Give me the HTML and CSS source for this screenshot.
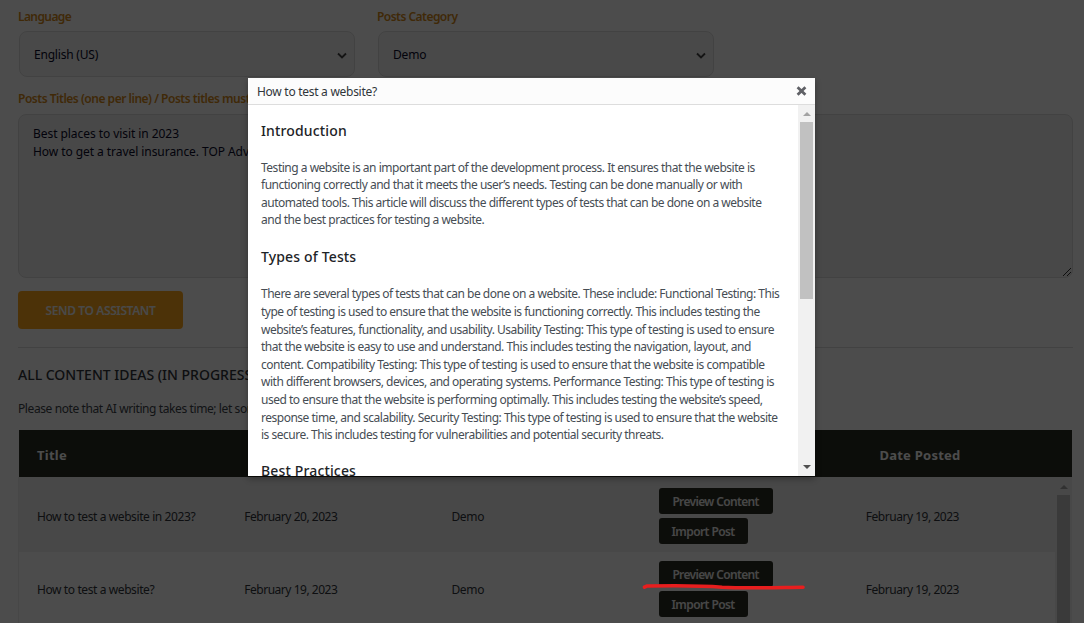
FILE: index.html
```html
<!DOCTYPE html>
<html lang="en">
<head>
<meta charset="utf-8">
<title>Content ideas</title>
<link rel="stylesheet" href="styles.css">
</head>
<body>
<main class="page">
  <div class="fields">
    <div class="field"><div class="label">Language</div>
      <div class="select"><span>English (US)</span><svg width="12" height="8" viewBox="0 0 12 8"><path d="M2 1.5 6 5.5 10 1.5"/></svg></div></div>
    <div class="field"><div class="label label-cat">Posts Category</div>
      <div class="select"><span>Demo</span><svg width="12" height="8" viewBox="0 0 12 8"><path d="M2 1.5 6 5.5 10 1.5"/></svg></div></div>
  </div>
  <div class="label label-titles">Posts Titles (one per line) / Posts titles must</div>
  <div class="textarea"><div>Best places to visit in 2023</div><div>How to get a travel insurance. TOP Adv</div>
    <svg class="grip" width="10" height="10" viewBox="0 0 10 10"><path d="M1 9 9 1M5 9 9 5"/></svg></div>
  <div class="send">SEND TO ASSISTANT</div>
  <h2 class="heading">ALL CONTENT IDEAS (IN PROGRESS</h2>
  <p class="note">Please note that AI writing takes time; let som</p>
  <div class="table">
    <div class="thead"><div>Title</div><div></div><div></div><div></div><div>Date Posted</div></div>
    <div class="tbody">
      <div class="rows">
        <div class="row odd"><div>How to test a website in 2023?</div><div>February 20, 2023</div><div>Demo</div><div class="actions"><span class="btn preview">Preview Content</span><span class="btn import">Import Post</span></div><div>February 19, 2023</div></div>
        <div class="row"><div>How to test a website?</div><div>February 19, 2023</div><div>Demo</div><div class="actions"><span class="btn preview">Preview Content</span><span class="btn import">Import Post</span></div><div>February 19, 2023</div></div>
      </div>
      <div class="bar"><i class="up"></i><i class="thumb"></i></div>
    </div>
  </div>
</main>
<div class="overlay"></div>
<section class="modal">
  <header class="modal-head"><span>How to test a website?</span><svg width="11" height="10" viewBox="0 0 11 10"><path d="M1.6 1.3 9.4 8.7M9.4 1.3 1.6 8.7"/></svg></header>
  <div class="modal-body">
    <article class="article">
      <h3>Introduction</h3>
      <p class="intro">Testing a website is an important part of the development process. It ensures that the website is<br>functioning correctly and that it meets the user’s needs. Testing can be done manually or with<br>automated tools. This article will discuss the different types of tests that can be done on a website<br>and the best practices for testing a website.</p>
      <h3>Types of Tests</h3>
      <p>There are several types of tests that can be done on a website. These include: Functional Testing: This<br>type of testing is used to ensure that the website is functioning correctly. This includes testing the<br>website’s features, functionality, and usability. Usability Testing: This type of testing is used to ensure<br>that the website is easy to use and understand. This includes testing the navigation, layout, and<br>content. Compatibility Testing: This type of testing is used to ensure that the website is compatible<br>with different browsers, devices, and operating systems. Performance Testing: This type of testing is<br>used to ensure that the website is performing optimally. This includes testing the website’s speed,<br>response time, and scalability. Security Testing: This type of testing is used to ensure that the website<br>is secure. This includes testing for vulnerabilities and potential security threats.</p>
      <h3>Best Practices</h3>
    </article>
    <div class="scroll"><i class="up"></i><i class="thumb"></i><i class="down"></i></div>
  </div>
</section>
<svg class="mark" width="164" height="10" viewBox="0 0 164 10"><path d="M2.5 5.2 5 4C30 3.500 60 3.500 80 5.200 105 6.500 135 5.500 161 5.200"/></svg>
</body>
</html>
```
FILE: styles.css
```css
* { box-sizing: border-box; }
body { margin: 0; width: 1084px; height: 623px; overflow: hidden; position: relative; background: #fff; font-family: "Noto Sans", "Open Sans", sans-serif; font-size: 12px; color: #3c434a; white-space: nowrap; }
h2, h3, p { margin: 0; }

.page { height: 623px; overflow: hidden; padding: 8px 11px 0 18px; }
.fields { display: flex; gap: 23px; padding-left: 1px; }
.field { width: 336px; }
.label { height: 18px; margin-left: -1px; line-height: 18px; font-weight: 600; color: #d58a1a; letter-spacing: -.6px; }
.label-cat { letter-spacing: -.53px; }
.select { display: flex; align-items: center; justify-content: space-between; height: 46px; margin-top: 5px; padding: 0 6px 0 14px; border: 1px solid #dedede; border-radius: 8px; background: #f4f4f4; color: #0a0a2a; letter-spacing: -.2px; }
.select svg { margin-top: 3px; fill: none; stroke: #444; stroke-width: 1.8; }
.label-titles { margin: 13px 0 0; letter-spacing: -.48px; }
.textarea { position: relative; height: 164px; margin-top: 6px; padding: 10px 14px; border: 1px solid #dedede; border-radius: 8px; background: #f1f1f1; color: #0a0a2a; line-height: 18px; letter-spacing: -.06px; }
.grip { position: absolute; right: 0; bottom: 0; stroke: #333; stroke-width: 1; }
.send { width: 165px; height: 38px; margin-top: 13px; border-radius: 4px; background: #ffa81c; color: #f6f6f6; text-align: center; line-height: 39px; font-weight: 600; letter-spacing: -.4px; }
.heading { height: 56px; margin-top: 18px; padding-top: 17px; width: 1055px; border-top: 1px solid #dcdcdc; font-size: 14px; line-height: 19px; font-weight: 500; color: #30353a; }
.note { height: 31px; margin-top: -4px; line-height: 19px; letter-spacing: -.4px; }
.table { width: 1055px; padding-left: 1px; padding-right: 1px; margin-top: -1px; color: #30353a; }
.thead { display: grid; grid-template-columns: repeat(5, 1fr); height: 47px; margin-top: 1px; background: #2b2d22; color: #fff; font-size: 13px; font-weight: 700; line-height: 50px; letter-spacing: .25px; }
.thead div { padding-left: 18px; }
.tbody { display: flex; height: 150px; border-left: 1px solid #eee; margin-left: -1px; }
.rows { width: 1037px; }
.row { display: grid; grid-template-columns: repeat(5, 207.2px); align-items: center; height: 73px; letter-spacing: -.47px; }
.row.odd { height: 75px; padding-top: 2px; background: #f0f0f0; }
.row > div { padding-left: 18px; padding-top: 2px; }
.row > div:first-child { letter-spacing: -.4px; }
.row > div:nth-child(3) { letter-spacing: -.3px; }
.row > .actions { display: flex; flex-direction: column; align-items: flex-start; gap: 4px; padding-top: 0; }
.btn { height: 26px; border-radius: 3px; background: #2b2d22; color: #eee; text-align: center; line-height: 27px; font-weight: 600; letter-spacing: -.65px; }
.preview { width: 114px; }
.import { width: 89px; letter-spacing: -.6px; }
.bar { width: 17px; background: #f1f1f1; padding: 8px 2px 0; }
.bar .thumb { display: block; height: 130px; background: #c1c1c1; margin-top: 6px; }
.up { display: block; width: 0; margin: auto; border: 4px solid transparent; border-top: 0; border-bottom-color: #a3a3a3; }
.down { display: block; width: 0; margin: auto auto 7px; border: 4px solid transparent; border-bottom: 0; border-top-color: #505050; }

.overlay { position: absolute; inset: 0; background: rgba(0,0,0,.7); }

.modal { position: absolute; left: 248px; top: 78px; width: 567px; height: 398px; background: #fff; overflow: hidden; box-shadow: 0 3px 6px rgba(0,0,0,.3); }
.modal-head { display: flex; justify-content: space-between; align-items: center; height: 27px; padding: 0 8px 0 9px; background: #fcfcfc; border-bottom: 1px solid #ddd; color: #30353a; letter-spacing: -.28px; }
.modal-head svg { fill: none; stroke: #606166; stroke-width: 2.8; }
.modal-body { display: flex; height: 371px; }
.article { width: 550px; padding: 15px 0 0 13px; line-height: 17.6px; letter-spacing: -.49px; }
.article h3 { height: 22px; line-height: 22px; font-size: 14px; font-weight: 500; color: #1d2327; letter-spacing: .15px; }
.article p { margin: 17px 0 16px; color: #464d54; }
.article .intro { margin: 16.5px 0 17.5px; }
.scroll { display: flex; flex-direction: column; width: 17px; padding: 7px 2px 0; background: #f1f1f1; }
.scroll .up { margin: 0 auto 6px; }
.scroll .thumb { height: 177px; background: #c1c1c1; }
.mark { position: absolute; left: 642px; top: 582px; fill: none; stroke: #e81e1e; stroke-width: 3.6; stroke-linecap: round; }
```
